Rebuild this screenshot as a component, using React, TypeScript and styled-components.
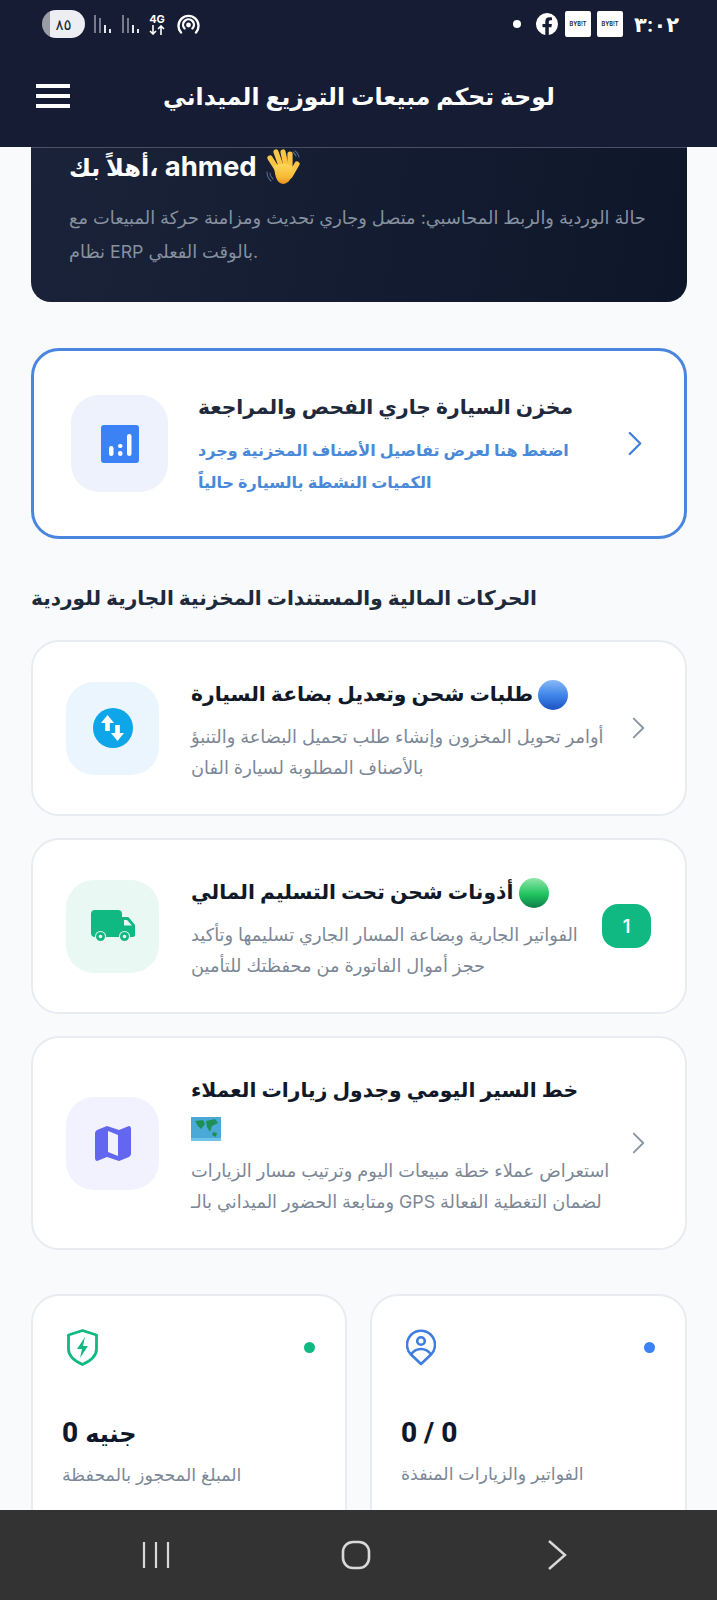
import styled, { createGlobalStyle } from 'styled-components'

const GlobalStyle = createGlobalStyle`
  html, body {
    margin: 0;
    padding: 0;
    background: #f8fafc;
  }
  * {
    box-sizing: border-box;
  }
`

const Screen = styled.div`
  width: 717px;
  height: 1600px;
  display: flex;
  flex-direction: column;
  overflow: hidden;
  background: #f8fafc;
  font-family: Inter, "Noto Sans", "DejaVu Sans", sans-serif;
  color: #0f172a;
`

const TopArea = styled.header`
  flex: none;
  height: 147px;
  background: #151c33;
  color: #fff;
`

const StatusBar = styled.div`
  height: 48px;
  padding: 0 42px 0 42px;
  display: flex;
  align-items: center;
  justify-content: space-between;
`

const StatusGroup = styled.div`
  display: flex;
  align-items: center;
`

const BatteryPill = styled.div`
  width: 43px;
  height: 28px;
  border-radius: 14px;
  background: linear-gradient(90deg, #9a9ca6 0 18%, #eceef3 18%);
  color: #1a1f33;
  font-size: 15px;
  font-weight: 500;
  display: flex;
  align-items: center;
  justify-content: center;
`

const SignalGroup = styled.div`
  margin: 0 8px 0 9px;
  display: flex;
  gap: 10px;
`

const FourG = styled.div`
  width: 18px;
  margin-right: 11px;
  display: flex;
  flex-direction: column;
  align-items: center;
  font-size: 11px;
  line-height: 11px;
  font-weight: 700;
`

const Dot = styled.span`
  width: 8px;
  height: 8px;
  border-radius: 50%;
  background: #fff;
  margin-right: 15px;
`

const BybitBox = styled.div`
  width: 26px;
  height: 26px;
  margin-left: 6px;
  border-radius: 2px;
  background: #fff;
  color: #2a2f3f;
  font-size: 5.5px;
  font-weight: 700;
  display: flex;
  align-items: center;
  justify-content: center;

  &:first-of-type {
    margin-left: 7px;
  }
`

const Clock = styled.span`
  margin-left: 11px;
  font-size: 21px;
  font-weight: 600;
  width: 41px;
`

const NavBar = styled.div`
  height: 99px;
  padding: 0 0 3px 36px;
  display: flex;
  align-items: center;
`

const MenuIcon = styled.div`
  width: 34px;
  height: 24px;
  display: flex;
  flex-direction: column;
  justify-content: space-between;

  span {
    height: 4px;
    background: #fff;
  }
`

const PageTitle = styled.h1`
  margin: 0 0 0 93px;
  font-size: 23.5px;
  font-weight: 600;
  white-space: nowrap;
`

const Main = styled.main`
  flex: 1;
  min-height: 0;
  overflow: hidden;
  padding: 0 30px 0 31px;
`

const Hero = styled.section`
  height: 155px;
  padding: 0 38px;
  border-radius: 0 0 20px 20px;
  background: linear-gradient(100deg, #1a2339, #0e162a);
  border-top: 1px solid #4a5164;
`

const Greeting = styled.h2`
  margin: 0;
  height: 38px;
  line-height: 34px;
  font-size: 27.5px;
  font-weight: 700;
  color: #fff;
  display: flex;
  align-items: center;
  gap: 8px;
`

const GreetingLine = styled.span`
  white-space: nowrap;
`

const GreetingWord = styled.span`
  font-size: 24px;
`

const HeroText = styled.p`
  margin: 15px 0 0;
  font-size: 17.8px;
  line-height: 34px;
  color: #87919f;
`

const FeatureCard = styled.section`
  margin-top: 46px;
  height: 191px;
  padding: 0 42px 0 37px;
  border: 3px solid #4a86e0;
  border-radius: 28px;
  background: #fff;
  display: flex;
  align-items: center;
`

const IconTile = styled.div<{ $bg: string; $size?: number }>`
  flex: none;
  width: ${(p) => p.$size ?? 93}px;
  height: ${(p) => p.$size ?? 93}px;
  border-radius: 28px;
  background: ${(p) => p.$bg};
  display: flex;
  align-items: center;
  justify-content: center;
`

const FeatureBody = styled.div`
  flex: 1;
  min-width: 0;
  margin: 0 24px 0 30px;
`

const FeatureTitle = styled.h3`
  margin: 0;
  font-size: 20.3px;
  line-height: 36px;
  font-weight: 600;
  color: #1e293b;
`

const FeatureText = styled.p`
  margin: 9px 0 0;
  font-size: 16px;
  line-height: 32px;
  font-weight: 600;
  color: #4a88d8;
`

const SectionTitle = styled.h2`
  margin: 41px 0 0;
  font-size: 20.1px;
  line-height: 36px;
  font-weight: 600;
  color: #1e293b;
`

const CardList = styled.div`
  margin-top: 24px;
  display: flex;
  flex-direction: column;
  gap: 22px;
`

const ActionCard = styled.article`
  min-height: 176px;
  padding: 31px 39px 31px 33px;
  border: 2px solid #e8ecf1;
  border-radius: 28px;
  background: #fff;
  display: flex;
  align-items: center;
`

const ActionBody = styled.div`
  flex: 1;
  min-width: 0;
  margin-left: 32px;
  padding-top: 2px;
`

const ActionTitle = styled.h3`
  margin: 0;
  font-size: 20.3px;
  line-height: 38px;
  font-weight: 600;
  color: #111827;
`

const ActionText = styled.p`
  margin: 8px 0 0;
  font-size: 17.8px;
  line-height: 31px;
  color: #7c8796;
  text-align: left;
`

const Chevron = styled.div`
  flex: none;
  width: 14px;
  margin-left: 21px;
  display: flex;
`

const CountBadge = styled.div`
  flex: none;
  width: 49px;
  height: 44px;
  margin: 0 -5px 0 16px;
  border-radius: 16px;
  background: #10b981;
  color: #fff;
  font-size: 18px;
  font-weight: 600;
  display: flex;
  align-items: center;
  justify-content: center;
`

const InlineEmoji = styled.svg`
  display: inline-block;
  vertical-align: middle;
`

const StatsGrid = styled.div`
  margin-top: 44px;
  display: grid;
  grid-template-columns: 316px 317px;
  gap: 23px;
`

const StatCard = styled.article`
  height: 240px;
  padding: 33px 30px 0 29px;
  border: 2px solid #e8ecf1;
  border-radius: 28px;
  background: #fff;
`

const StatTop = styled.div`
  height: 37px;
  padding-left: 5px;
  display: flex;
  align-items: center;
  justify-content: space-between;
`

const StatDot = styled.span<{ $color: string }>`
  width: 11px;
  height: 11px;
  border-radius: 50%;
  background: ${(p) => p.$color};
`

const StatValue = styled.div`
  margin-top: 49px;
  font-family: Roboto, Inter, "DejaVu Sans", sans-serif;
  font-size: 28px;
  line-height: 36px;
  font-weight: 800;
  color: #0f172a;
`

const StatUnit = styled.span`
  font-size: 24px;
`

const StatLabel = styled.div`
  margin-top: 9px;
  font-size: 17.4px;
  line-height: 28px;
  color: #7c8796;
`

const SystemNav = styled.nav`
  flex: none;
  height: 90px;
  background: #333333;
  padding: 0 150px 0 142px;
  display: flex;
  align-items: center;
  justify-content: space-between;
`

const HomeKey = styled.svg`
  margin-right: 6px;
`

const ChevronIcon = ({ color, width, small }: { color: string; width: number; small?: boolean }) => (
  <svg width={small ? 13 : 16} height={small ? 22 : 27} viewBox="0 0 16 28" fill="none">
    <path d="M2 2l12 12L2 26" stroke={color} strokeWidth={width} strokeLinecap="round" strokeLinejoin="round" />
  </svg>
)

const Signal = () => (
  <svg width="18" height="18" viewBox="0 0 18 18">
    <rect x="0" y="0" width="2" height="18" fill="#777c8c" />
    <rect x="5" y="3" width="2" height="15" fill="#777c8c" />
    <rect x="10" y="10" width="2" height="8" fill="#e5e7ee" />
    <rect x="15" y="14" width="2" height="4" fill="#e5e7ee" />
  </svg>
)

const WaveHand = () => (
  <svg width="36" height="36" viewBox="0 0 36 36" fill="none" strokeLinecap="round">
    <defs>
      <linearGradient id="handFill" x1="0" y1="0" x2="0" y2="1">
        <stop offset="0" stopColor="#fdd85a" />
        <stop offset="0.65" stopColor="#f9b937" />
        <stop offset="1" stopColor="#e8901f" />
      </linearGradient>
    </defs>
    <g stroke="#fac544" strokeWidth="5.2">
      <path d="M5 9l7 11" />
      <path d="M11 3l5 14" />
      <path d="M18 3l3 14" />
      <path d="M25 5l0 13" />
      <path d="M32 15l-7 12" />
    </g>
    <path d="M9 17c5-3 14-3 19 1 0 8-2 15-9 17-6 0-9-5-10-18z" fill="url(#handFill)" />
    <path d="M2 23c0 4 2 7 4 9M5 24c0 2 1 4 3 6M30 2c2 1 3 3 4 6M28 3c1 1 2 2 3 4" stroke="#56688a" strokeWidth="1.1" />
  </svg>
)

const App = () => {
  return (
    <Screen>
      <GlobalStyle />
      <TopArea>
        <StatusBar>
          <StatusGroup>
            <BatteryPill>٨٥</BatteryPill>
            <SignalGroup>
              <Signal />
              <Signal />
            </SignalGroup>
            <FourG>
              4G
              <svg width="17" height="10" viewBox="0 0 17 10" fill="none" stroke="#fff" strokeWidth="1.6">
                <path d="M4 0v9M1 6l3 3 3-3M12 10V1M9 4l3-3 3 3" />
              </svg>
            </FourG>
            <svg width="23" height="20" viewBox="0 0 23 20" fill="none" stroke="#fff" strokeWidth="2.4" strokeLinecap="round">
              <path d="M4 18.500a10 10 0 1 1 15 0" />
              <path d="M7.600 14.500a5.400 5.400 0 1 1 7.800 0" />
              <circle cx="11.500" cy="11" r="1.200" fill="#fff" />
            </svg>
          </StatusGroup>
          <StatusGroup>
            <Dot />
            <svg width="22" height="22" viewBox="0 0 22 22">
              <path
                fill="#fff"
                d="M22 11a11 11 0 1 0-12.700 10.900v-7.700H6.500V11h2.800V8.600c0-2.800 1.600-4.300 4.200-4.300 1.200 0 2.500.2 2.500.2v2.700h-1.400c-1.400 0-1.800.9-1.800 1.700V11h3.100l-.5 3.200h-2.600v7.700A11 11 0 0 0 22 11z"
              />
            </svg>
            <BybitBox>BYB!T</BybitBox>
            <BybitBox>BYB!T</BybitBox>
            <Clock>٣:٠٢</Clock>
          </StatusGroup>
        </StatusBar>
        <NavBar>
          <MenuIcon>
            <span />
            <span />
            <span />
          </MenuIcon>
          <PageTitle>لوحة تحكم مبيعات التوزيع الميداني</PageTitle>
        </NavBar>
      </TopArea>

      <Main>
        <Hero>
          <Greeting>
            <GreetingLine>
              <GreetingWord>أهلاً بك،</GreetingWord> ahmed
            </GreetingLine>
            <WaveHand />
          </Greeting>
          <HeroText>
            حالة الوردية والربط المحاسبي: متصل وجاري تحديث ومزامنة حركة المبيعات مع نظام ERP بالوقت الفعلي.
          </HeroText>
        </Hero>

        <FeatureCard>
          <IconTile $bg="#edf2fc" $size={97}>
            <svg width="38" height="38" viewBox="0 0 38 38">
              <rect width="38" height="38" rx="3" fill="#3b82f6" />
              <rect x="8" y="21" width="4.500" height="10" rx="2.200" fill="#fff" />
              <rect x="17" y="19" width="4.500" height="4" rx="2" fill="#fff" />
              <rect x="17" y="26" width="4.500" height="5" rx="2.200" fill="#fff" />
              <rect x="26" y="9" width="4.500" height="22" rx="2.200" fill="#fff" />
            </svg>
          </IconTile>
          <FeatureBody>
            <FeatureTitle>مخزن السيارة جاري الفحص والمراجعة</FeatureTitle>
            <FeatureText>اضغط هنا لعرض تفاصيل الأصناف المخزنية وجرد الكميات النشطة بالسيارة حالياً</FeatureText>
          </FeatureBody>
          <Chevron>
            <ChevronIcon color="#3f7fe0" width={2.6} />
          </Chevron>
        </FeatureCard>

        <SectionTitle>الحركات المالية والمستندات المخزنية الجارية للوردية</SectionTitle>

        <CardList>
          <ActionCard>
            <IconTile $bg="#eaf5fd">
              <svg width="40" height="40" viewBox="0 0 40 40">
                <circle cx="20" cy="20" r="20" fill="#0ea5e9" />
                <path d="M8 15l6.500-8 6.500 8h-4.200v8h-4.600v-8z" fill="#fff" />
                <path d="M18 25l6.500 8 6.500-8h-4.200v-8h-4.600v8z" fill="#fff" />
              </svg>
            </IconTile>
            <ActionBody>
              <ActionTitle>
                طلبات شحن وتعديل بضاعة السيارة{' '}
                <InlineEmoji width="30" height="30" viewBox="0 0 30 30">
                  <defs>
                    <linearGradient id="blueBall" x1="0" y1="0" x2="0" y2="1">
                      <stop offset="0" stopColor="#8ab8f5" />
                      <stop offset="0.5" stopColor="#3f87ea" />
                      <stop offset="1" stopColor="#1c52c4" />
                    </linearGradient>
                  </defs>
                  <circle cx="15" cy="15" r="15" fill="url(#blueBall)" />
                </InlineEmoji>
              </ActionTitle>
              <ActionText dir="rtl">
                أوامر تحويل المخزون وإنشاء طلب تحميل البضاعة والتنبؤ بالأصناف المطلوبة لسيارة الفان
              </ActionText>
            </ActionBody>
            <Chevron>
              <ChevronIcon color="#8b95a4" width={2.4} small />
            </Chevron>
          </ActionCard>

          <ActionCard>
            <IconTile $bg="#e9f8f3">
              <svg width="44" height="32" viewBox="0 0 44 32">
                <rect width="31" height="27" rx="4" fill="#10b981" />
                <path d="M30 7h6c1 0 2 .5 2.500 1.200L44 15v10c0 1-1 2-2 2H30z" fill="#10b981" />
                <path d="M33 10h3l5 5.500h-8z" fill="#e9f8f3" />
                <circle cx="9.500" cy="26.500" r="5.500" fill="#e9f8f3" />
                <circle cx="33.500" cy="26.500" r="5.500" fill="#e9f8f3" />
                <circle cx="9.500" cy="26.500" r="4.500" fill="#10b981" />
                <circle cx="33.500" cy="26.500" r="4.500" fill="#10b981" />
                <circle cx="9.500" cy="26.500" r="1.800" fill="#e9f8f3" />
                <circle cx="33.500" cy="26.500" r="1.800" fill="#e9f8f3" />
              </svg>
            </IconTile>
            <ActionBody>
              <ActionTitle>
                أذونات شحن تحت التسليم المالي{' '}
                <InlineEmoji width="30" height="30" viewBox="0 0 30 30">
                  <defs>
                    <linearGradient id="greenBall" x1="0" y1="0" x2="0" y2="1">
                      <stop offset="0" stopColor="#8fe7a8" />
                      <stop offset="0.55" stopColor="#1fc45f" />
                      <stop offset="1" stopColor="#0e7c4a" />
                    </linearGradient>
                  </defs>
                  <circle cx="15" cy="15" r="15" fill="url(#greenBall)" />
                </InlineEmoji>
              </ActionTitle>
              <ActionText dir="rtl">
                الفواتير الجارية وبضاعة المسار الجاري تسليمها وتأكيد حجز أموال الفاتورة من محفظتك للتأمين
              </ActionText>
            </ActionBody>
            <CountBadge>1</CountBadge>
          </ActionCard>

          <ActionCard>
            <IconTile $bg="#f1f2fd">
              <svg width="36" height="36" viewBox="0 0 36 36">
                <path
                  fill="#6366f1"
                  d="M2 5l10-4 12 4 10-4c1 0 2 1 2 3v25c0 1-1 2-2 3l-10 4-12-4-10 4c-1 0-2-1-2-3V8c0-1 1-2 2-3z"
                />
                <path fill="#f1f2fd" d="M13 6l10 4v21l-10-4z" />
              </svg>
            </IconTile>
            <ActionBody>
              <ActionTitle>
                خط السير اليومي وجدول زيارات العملاء{' '}
                <InlineEmoji width="30" height="24" viewBox="0 0 30 24">
                  <rect width="30" height="24" fill="#4aa9d6" />
                  <path d="M4 4l8-1 2 4-4 5-3-3zM15 4l9-2 3 4-6 3-2 6-3-5zM22 15l4 1-1 4-4-2z" fill="#1f8f58" />
                  <rect y="21" width="30" height="3" fill="#6fc3e8" />
                </InlineEmoji>
              </ActionTitle>
              <ActionText dir="rtl">
                استعراض عملاء خطة مبيعات اليوم وترتيب مسار الزيارات لضمان التغطية الفعالة GPS ومتابعة الحضور الميداني بالـ
              </ActionText>
            </ActionBody>
            <Chevron>
              <ChevronIcon color="#8b95a4" width={2.4} small />
            </Chevron>
          </ActionCard>
        </CardList>

        <StatsGrid>
          <StatCard>
            <StatTop>
              <svg width="31" height="37" viewBox="0 0 31 37" fill="none">
                <path d="M15.500 1.500L29.500 6v14c0 7-6 12-14 15.500C7.500 32 1.500 27 1.500 20V6z" stroke="#10b981" strokeWidth="2.800" strokeLinejoin="round" />
                <path d="M18 8l-8 12h5l-2 9 8-12h-5z" fill="#10b981" />
              </svg>
              <StatDot $color="#10b981" />
            </StatTop>
            <StatValue>
              0 <StatUnit>جنيه</StatUnit>
            </StatValue>
            <StatLabel>المبلغ المحجوز بالمحفظة</StatLabel>
          </StatCard>
          <StatCard>
            <StatTop>
              <svg width="30" height="37" viewBox="0 0 30 37" fill="none" stroke="#3f7de0" strokeWidth="2.600" strokeLinejoin="round">
                <path d="M15 35L5 25.500a14 14 0 1 1 20 0z" />
                <circle cx="15" cy="12" r="3.800" />
                <path d="M5 25.500C8 21 11 20 15 20s7 1 10 5.500" />
              </svg>
              <StatDot $color="#3b82f6" />
            </StatTop>
            <StatValue>0 / 0</StatValue>
            <StatLabel>الفواتير والزيارات المنفذة</StatLabel>
          </StatCard>
        </StatsGrid>
      </Main>

      <SystemNav>
        <svg width="28" height="28" viewBox="0 0 28 28" stroke="#d9d9d9" strokeWidth="2.200">
          <path d="M2 1v26M14 1v26M26 1v26" />
        </svg>
        <HomeKey width="30" height="30" viewBox="0 0 30 30" fill="none" stroke="#d9d9d9" strokeWidth="2.600">
          <rect x="2" y="2" width="26" height="26" rx="10" />
        </HomeKey>
        <svg width="20" height="30" viewBox="0 0 20 30" fill="none" stroke="#d9d9d9" strokeWidth="2.400">
          <path d="M2 1l16 14L2 29" />
        </svg>
      </SystemNav>
    </Screen>
  )
}

export default App
